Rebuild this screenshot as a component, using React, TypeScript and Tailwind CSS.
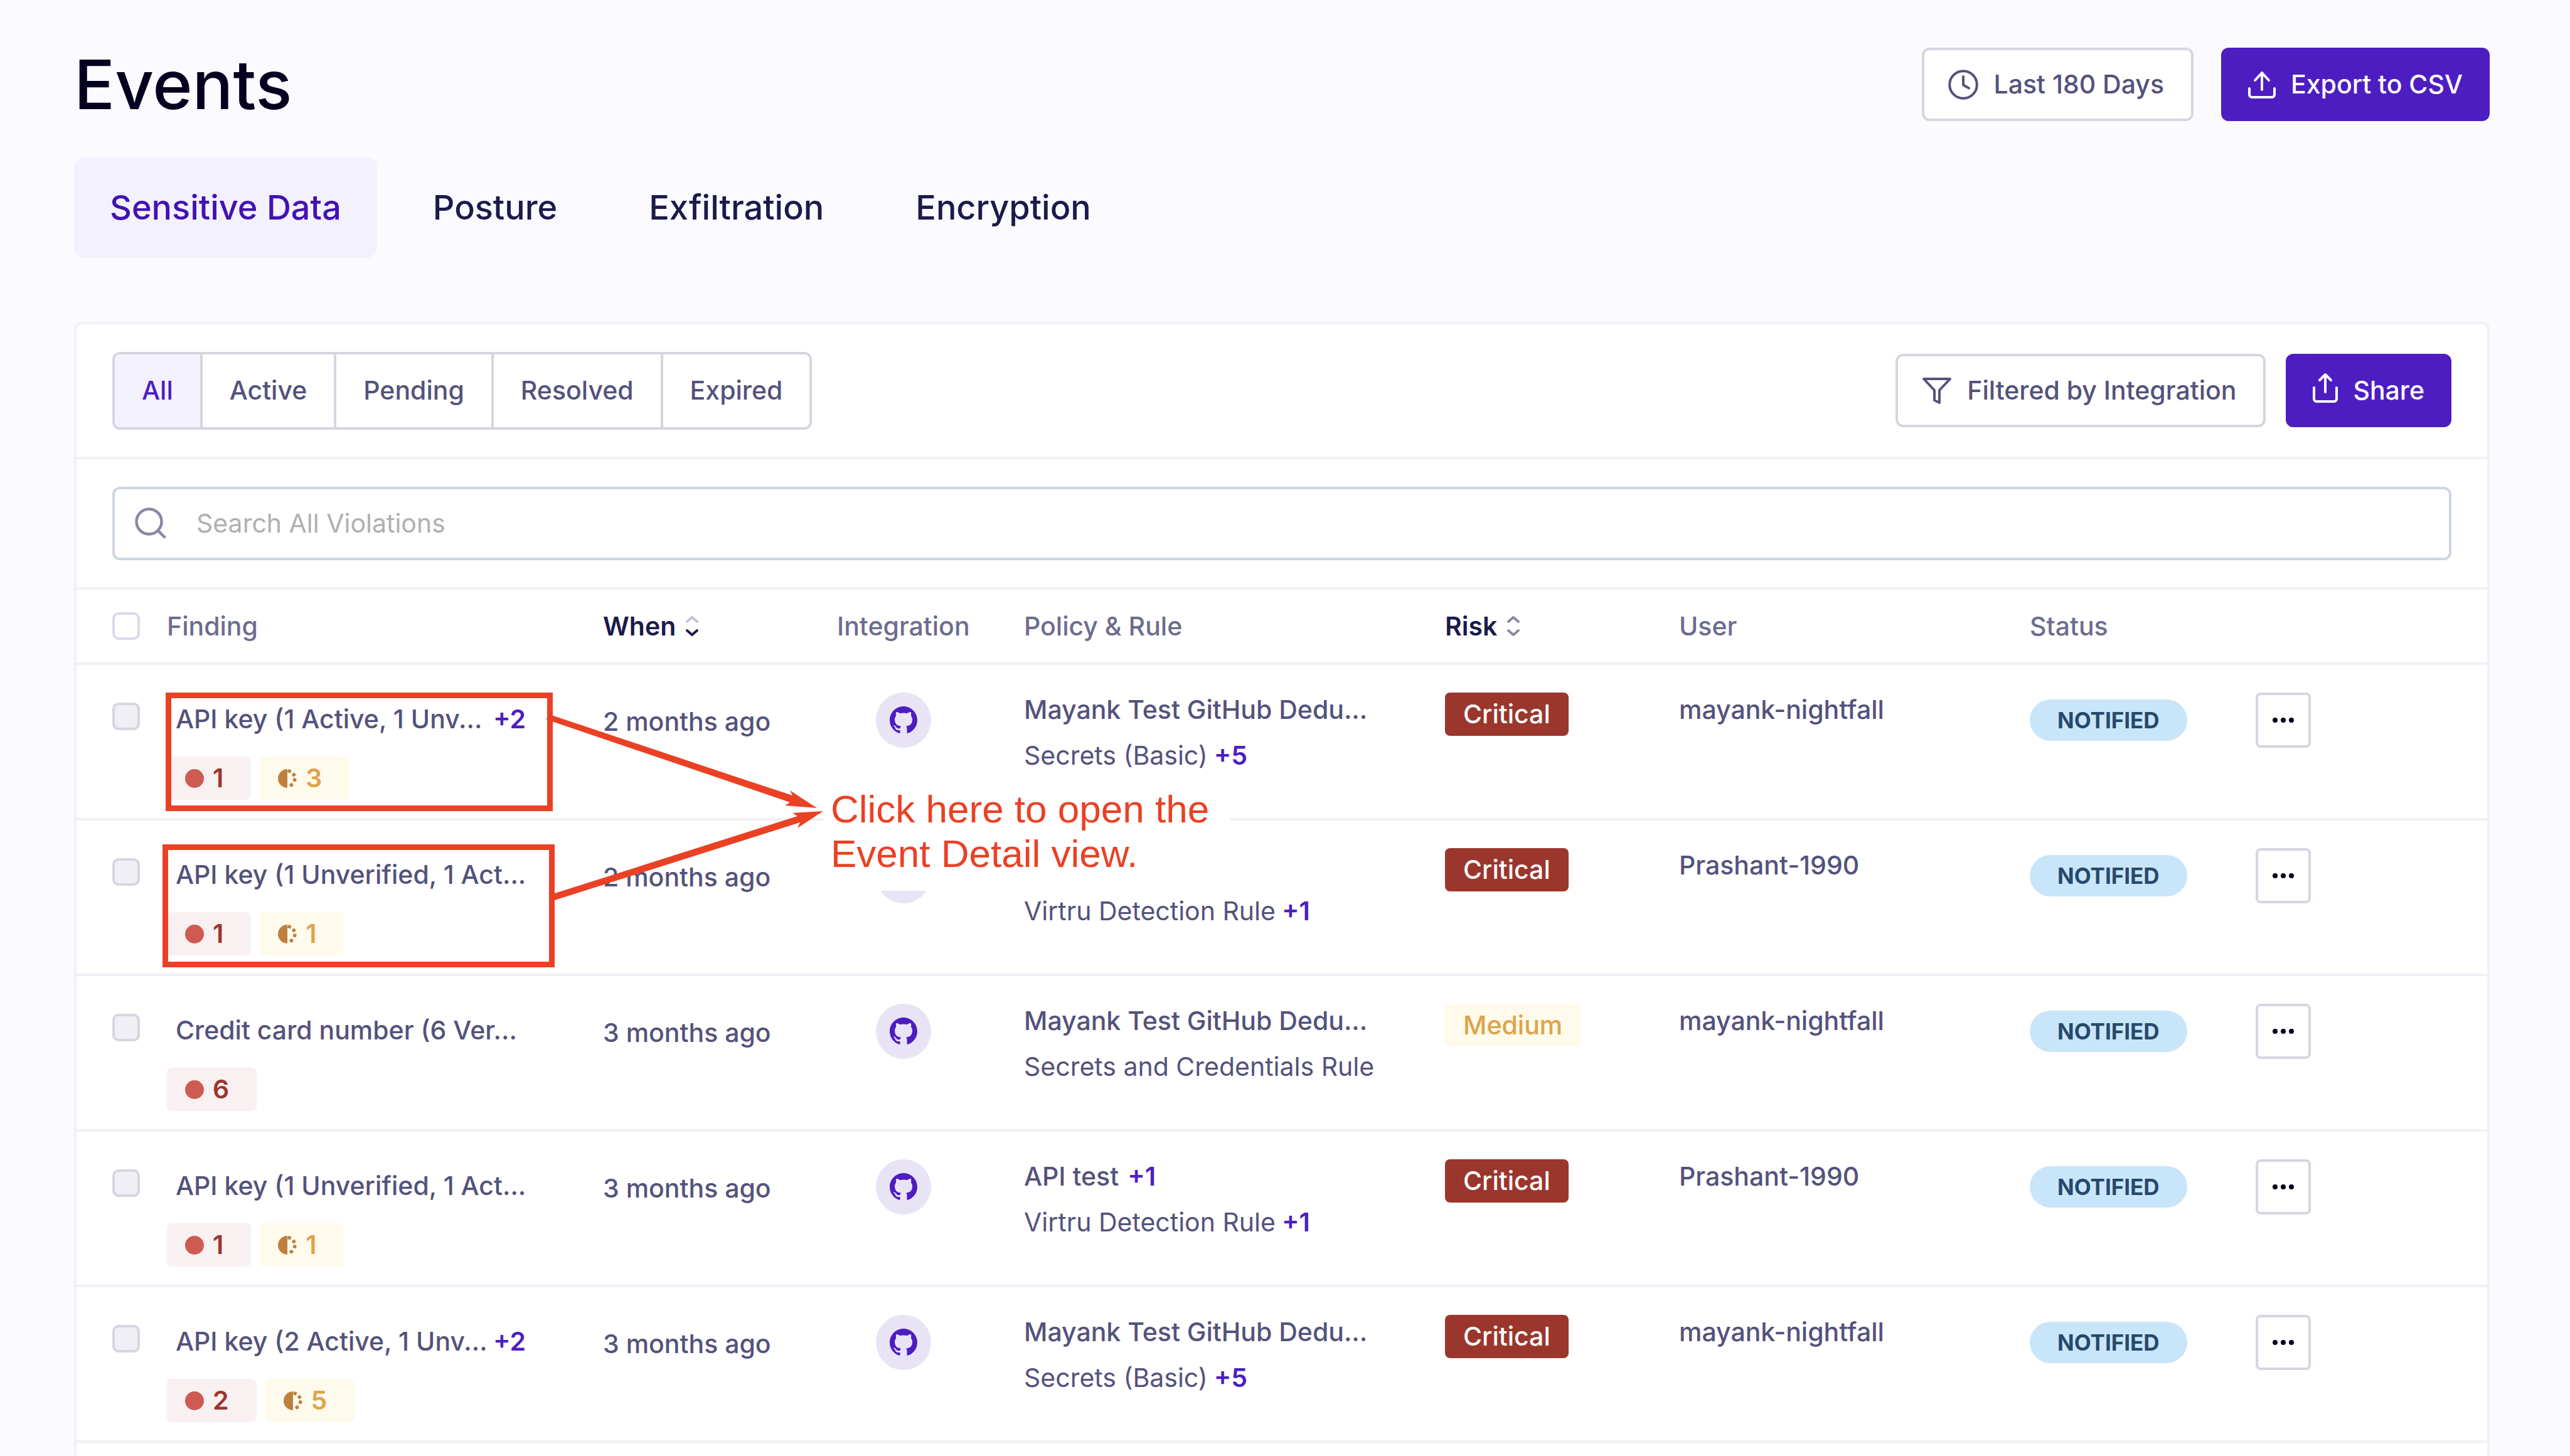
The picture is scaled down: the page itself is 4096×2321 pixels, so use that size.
import type { ReactNode } from "react";

type Tag = { kind: "active" | "unverified"; count: number };

type EventRow = {
  finding: string;
  more?: string;
  tags: Tag[];
  when: string;
  policy?: string;
  policyMore?: string;
  rule: string;
  ruleMore?: string;
  risk: "Critical" | "Medium";
  user: string;
};

const rows: EventRow[] = [
  {
    finding: "API key (1 Active, 1 Unv...",
    more: "+2",
    tags: [{ kind: "active", count: 1 }, { kind: "unverified", count: 3 }],
    when: "2 months ago",
    policy: "Mayank Test GitHub Dedu...",
    rule: "Secrets (Basic)",
    ruleMore: "+5",
    risk: "Critical",
    user: "mayank-nightfall",
  },
  {
    finding: "API key (1 Unverified, 1 Act...",
    tags: [{ kind: "active", count: 1 }, { kind: "unverified", count: 1 }],
    when: "2 months ago",
    rule: "Virtru Detection Rule",
    ruleMore: "+1",
    risk: "Critical",
    user: "Prashant-1990",
  },
  {
    finding: "Credit card number (6 Ver...",
    tags: [{ kind: "active", count: 6 }],
    when: "3 months ago",
    policy: "Mayank Test GitHub Dedu...",
    rule: "Secrets and Credentials Rule",
    risk: "Medium",
    user: "mayank-nightfall",
  },
  {
    finding: "API key (1 Unverified, 1 Act...",
    tags: [{ kind: "active", count: 1 }, { kind: "unverified", count: 1 }],
    when: "3 months ago",
    policy: "API test",
    policyMore: "+1",
    rule: "Virtru Detection Rule",
    ruleMore: "+1",
    risk: "Critical",
    user: "Prashant-1990",
  },
  {
    finding: "API key (2 Active, 1 Unv...",
    more: "+2",
    tags: [{ kind: "active", count: 2 }, { kind: "unverified", count: 5 }],
    when: "3 months ago",
    policy: "Mayank Test GitHub Dedu...",
    rule: "Secrets (Basic)",
    ruleMore: "+5",
    risk: "Critical",
    user: "mayank-nightfall",
  },
];

const tabs = ["Sensitive Data", "Posture", "Exfiltration", "Encryption"];
const filters = ["All", "Active", "Pending", "Resolved", "Expired"];

function ClockIcon() {
  return (
    <svg aria-hidden="true" className="size-12 shrink-0" viewBox="0 0 48 48" fill="none" stroke="currentColor" strokeWidth="4" strokeLinecap="round" strokeLinejoin="round">
      <circle cx="24" cy="24" r="21.8" />
      <path d="M24 11v13.5l9 5" />
    </svg>
  );
}

function ExportIcon() {
  return (
    <svg aria-hidden="true" className="size-11 shrink-0" viewBox="0 0 44 44" fill="none" stroke="currentColor" strokeWidth="4" strokeLinecap="round" strokeLinejoin="round">
      <path d="M2 28v10a4 4 0 0 0 4 4h32a4 4 0 0 0 4-4V28" />
      <path d="M22 30V3M11 15L22 3l11 12" />
    </svg>
  );
}

function ShareIcon() {
  return (
    <svg aria-hidden="true" className="h-[58px] w-10 shrink-0" viewBox="0 0 40 58" fill="none" stroke="currentColor" strokeWidth="4" strokeLinecap="round" strokeLinejoin="round">
      <path d="M2 24v18a4 4 0 0 0 4 4h28a4 4 0 0 0 4-4V24" />
      <path d="M20 31V3M11 12L20 3l9 9" />
    </svg>
  );
}

function FilterIcon() {
  return (
    <svg aria-hidden="true" className="h-11 w-12 shrink-0" viewBox="0 0 48 44" fill="none" stroke="currentColor" strokeWidth="4" strokeLinejoin="round">
      <path d="M3 3H45L28 21V41L20 37V21Z" />
    </svg>
  );
}

function SearchIcon() {
  return (
    <svg aria-hidden="true" className="size-[50px] shrink-0 text-[#8988a6]" viewBox="0 0 50 50" fill="none" stroke="currentColor" strokeWidth="4.5" strokeLinecap="round">
      <circle cx="22.5" cy="22.5" r="20" />
      <path d="M37 37L47 47" />
    </svg>
  );
}

function SortIcon({ up, down }: { up: string; down: string }) {
  return (
    <svg aria-hidden="true" className="h-[34px] w-5 shrink-0" viewBox="0 0 20 34" fill="none" strokeWidth="4" strokeLinecap="round" strokeLinejoin="round">
      <path className={up} d="M2 10L10 3L18 10" />
      <path className={down} d="M2 24L10 31L18 24" />
    </svg>
  );
}

function GitHubIcon() {
  return (
    <svg aria-hidden="true" className="size-11" viewBox="0 0 16 16" fill="currentColor">
      <path d="M8 0C3.58 0 0 3.58 0 8c0 3.54 2.29 6.53 5.47 7.59.4.07.55-.17.55-.38 0-.19-.01-.82-.01-1.49-2.01.37-2.53-.49-2.69-.94-.09-.23-.48-.94-.82-1.13-.28-.15-.68-.52-.01-.53.63-.01 1.08.58 1.23.82.72 1.21 1.87.87 2.33.66.07-.52.28-.87.51-1.07-1.78-.2-3.64-.89-3.64-3.95 0-.87.31-1.59.82-2.15-.08-.2-.36-1.02.08-2.12 0 0 .67-.21 2.2.82.64-.18 1.32-.27 2-.27s1.36.09 2 .27c1.53-1.04 2.2-.82 2.2-.82.44 1.1.16 1.92.08 2.12.51.56.82 1.27.82 2.15 0 3.07-1.87 3.75-3.65 3.95.29.25.54.73.54 1.48 0 1.07-.01 1.93-.01 2.2 0 .21.15.46.55.38A8.01 8.01 0 0 0 16 8c0-4.42-3.58-8-8-8z" />
    </svg>
  );
}

function HalfDotIcon() {
  return (
    <svg aria-hidden="true" className="size-[30px] shrink-0 text-[#bf803f]" viewBox="0 0 30 30" fill="currentColor">
      <path d="M15 0A15 15 0 0 0 15 30Z" />
      <rect x="15.5" y="0.6" width="5.4" height="5.4" rx="1.2" transform="rotate(15 18.2 3.3)" />
      <rect x="22.6" y="6.3" width="5.4" height="5.4" rx="1.2" transform="rotate(55 25.3 9)" />
      <rect x="24" y="14.5" width="5.4" height="5.4" rx="1.2" transform="rotate(10 26.7 17.2)" />
      <rect x="18.7" y="22.7" width="5.4" height="5.4" rx="1.2" transform="rotate(-30 21.4 25.4)" />
    </svg>
  );
}

function OutlineButton({ children }: { children: ReactNode }) {
  return (
    <button type="button" className="flex h-[117px] items-center gap-6 rounded-xl border-4 border-[#d6d5e0] bg-white pr-[43px] pl-[38px] font-medium text-[#54527c]">
      {children}
    </button>
  );
}

function SolidButton({ children }: { children: ReactNode }) {
  return (
    <button type="button" className="flex h-[117px] items-center gap-6 rounded-xl bg-[#4e1dc2] px-[43px] font-medium text-white">
      {children}
    </button>
  );
}

function CountTag({ kind, count }: Tag) {
  if (kind === "active") {
    return (
      <span className="flex h-[69px] items-center gap-3.5 rounded-lg bg-[#f9f0f1] pr-11 pl-[29px] font-semibold text-[#9b362c]">
        <span className="size-[30px] rounded-full bg-[#ce5b51]" />
        {count}
      </span>
    );
  }
  return (
    <span className="flex h-[69px] items-center gap-3.5 rounded-lg bg-[#fefaec] pr-11 pl-[29px] font-semibold text-[#dfa349]">
      <HalfDotIcon />
      {count}
    </span>
  );
}

function More({ children }: { children: ReactNode }) {
  return <a href="#more" className="font-semibold text-[#4e1dc2]">{children}</a>;
}

function EventTable() {
  return (
    <table className="w-full table-fixed border-separate border-spacing-0 text-left leading-[73px]">
      <colgroup>
        <col className="w-[144px]" />
        <col className="w-[695px]" />
        <col className="w-[373px]" />
        <col className="w-[298px]" />
        <col className="w-[671px]" />
        <col className="w-[373px]" />
        <col className="w-[559px]" />
        <col className="w-[360px]" />
        <col className="w-[369px]" />
      </colgroup>
      <thead className="text-[#6d6c8f] [&_th]:h-[120px] [&_th]:border-b-4 [&_th]:border-[#f0f0f6] [&_th]:p-0 [&_th]:align-middle [&_th]:font-medium">
        <tr>
          <th scope="col">
            <input type="checkbox" aria-label="Select all findings" className="ml-[57px] block size-11 appearance-none rounded-[10px] border-4 border-[#dcd9ea] bg-white" />
          </th>
          <th scope="col">Finding</th>
          <th scope="col" aria-sort="descending">
            <button type="button" className="flex items-center gap-4 font-semibold text-[#1b1a4b]">
              When
              <SortIcon up="stroke-[#c4c2d4]" down="stroke-[#1b1a4b]" />
            </button>
          </th>
          <th scope="col">Integration</th>
          <th scope="col">Policy &amp; Rule</th>
          <th scope="col">
            <button type="button" className="flex items-center gap-4 font-semibold text-[#1b1a4b]">
              Risk
              <SortIcon up="stroke-[#8988a6]" down="stroke-[#8988a6]" />
            </button>
          </th>
          <th scope="col">User</th>
          <th scope="col">Status</th>
          <th scope="col" aria-label="Actions" />
        </tr>
      </thead>
      <tbody className="text-[#54527c] [&_td]:h-[248px] [&_td]:border-b-4 [&_td]:border-[#f0f0f6] [&_td]:p-0 [&_td]:align-top">
        {rows.map((row, i) => (
          <tr key={i}>
            <td>
              <input type="checkbox" aria-label={`Select ${row.finding}`} className="mt-[60px] ml-[57px] block size-11 appearance-none rounded-[10px] border-4 border-[#d6d5e0] bg-[#f0eff5]" />
            </td>
            <td>
              <div className="mt-[50px] flex w-[572px] justify-between pl-3.5 font-medium whitespace-nowrap">
                <span>{row.finding}</span>
                {row.more && <More>{row.more}</More>}
              </div>
              <div className="mt-[23px] flex gap-3.5">
                {row.tags.map((tag) => (
                  <CountTag key={tag.kind} kind={tag.kind} count={tag.count} />
                ))}
              </div>
            </td>
            <td>
              <div className="mt-[54px] font-medium">{row.when}</div>
            </td>
            <td>
              <div className="mt-11 ml-[62px] flex size-[88px] items-center justify-center rounded-full bg-[#e8e4f5] text-[#4e1dc2]">
                <GitHubIcon />
              </div>
            </td>
            <td>
              <div className="mt-[35px] flex h-[73px] gap-3.5 font-medium whitespace-nowrap">
                {row.policy && <span>{row.policy}</span>}
                {row.policyMore && <More>{row.policyMore}</More>}
              </div>
              <div className="flex gap-2.5 whitespace-nowrap">
                <span>{row.rule}</span>
                {row.ruleMore && <More>{row.ruleMore}</More>}
              </div>
            </td>
            <td>
              <div className="mt-11 flex">
                <span
                  className={
                    row.risk === "Critical"
                      ? "flex h-[69px] items-center rounded-lg bg-[#9b362c] px-[29px] font-medium text-white"
                      : "flex h-[69px] items-center rounded-lg bg-[#fefaec] px-[29px] font-medium text-[#dfa349]"
                  }
                >
                  {row.risk}
                </span>
              </div>
            </td>
            <td>
              <div className="mt-[35px] font-medium">{row.user}</div>
            </td>
            <td>
              <div className="mt-[55px] flex">
                <span className="flex h-[66px] items-center rounded-full bg-[#c9e5f9] px-11 text-[35px] font-bold text-[#27496b]">
                  NOTIFIED
                </span>
              </div>
            </td>
            <td>
              <button type="button" aria-label="More actions" className="mt-11 flex size-[88px] items-center justify-center gap-[5px] rounded-lg border-4 border-[#d6d5e0] bg-white">
                <span className="size-2 rounded-full bg-[#04001f]" />
                <span className="size-2 rounded-full bg-[#04001f]" />
                <span className="size-2 rounded-full bg-[#04001f]" />
              </button>
            </td>
          </tr>
        ))}
      </tbody>
    </table>
  );
}

function Annotations() {
  return (
    <div className="pointer-events-none absolute inset-0">
      <div className="absolute top-[1104px] left-[264px] h-[189px] w-[617px] border-[9px] border-[#ea4125]" />
      <div className="absolute top-[1346px] left-[259px] h-[196px] w-[625px] border-[9px] border-[#ea4125]" />
      <p className="absolute top-[1244px] left-[1312px] h-[176px] w-[648px] bg-white pt-2.5 pl-3 font-['Liberation_Sans',sans-serif] text-[62px] leading-[71px] text-[#ea4125]">
        Click here to open the
        <br />
        Event Detail view.
      </p>
      <svg aria-hidden="true" className="absolute top-[1120px] left-[860px] h-[320px] w-[460px]" viewBox="860 1120 460 320" fill="#ea4125">
        <path d="M873 1138L1175 1239L1263 1268L1259 1260L1302 1288L1251 1284L1259 1279L1142 1239L871 1147Z" />
        <path d="M881 1425L1271 1301L1263 1296L1312 1293L1271 1320L1275 1311L884 1435Z" />
      </svg>
    </div>
  );
}

export default function App() {
  return (
    <div className="relative flex min-h-screen flex-col bg-[#fbfaff] pt-[76px] pr-32 pl-[118px] font-[Inter,sans-serif] text-[41px] leading-none">
      <header className="flex items-center justify-between">
        <h1 className="text-[108px] font-medium text-[#04001f]">Events</h1>
        <div className="flex gap-11">
          <OutlineButton>
            <ClockIcon />
            Last 180 Days
          </OutlineButton>
          <SolidButton>
            <ExportIcon />
            Export to CSV
          </SolidButton>
        </div>
      </header>

      <nav aria-label="Event categories" className="mt-[58px] flex gap-8 text-[54px] font-medium">
        {tabs.map((tab, i) => (
          <a
            key={tab}
            href="#events"
            className={
              i === 0
                ? "flex h-40 items-center rounded-2xl bg-[#f3f1fb] px-[57px] text-[#4211b4]"
                : "flex h-40 items-center rounded-2xl px-[57px] text-[#1b1a4b]"
            }
          >
            {tab}
          </a>
        ))}
      </nav>

      <main className="mt-[102px] flex-1 rounded-t-xl border-4 border-b-0 border-[#f0f0f6] bg-white">
        <div className="flex h-[215px] items-center justify-between border-b-4 border-[#f0f0f6] px-[57px]">
          <div role="group" aria-label="Filter by state" className="flex h-[124px] divide-x-4 divide-[#d6d5e0] overflow-hidden rounded-xl border-4 border-[#d6d5e0]">
            {filters.map((filter, i) => (
              <button
                key={filter}
                type="button"
                aria-pressed={i === 0}
                className={
                  i === 0
                    ? "bg-[#f3f1fb] px-[43px] font-medium text-[#4e1dc2]"
                    : "px-[43px] font-medium text-[#54527c]"
                }
              >
                {filter}
              </button>
            ))}
          </div>
          <div className="flex gap-8">
            <OutlineButton>
              <FilterIcon />
              Filtered by Integration
            </OutlineButton>
            <SolidButton>
              <ShareIcon />
              Share
            </SolidButton>
          </div>
        </div>

        <div className="flex h-[208px] items-center border-b-4 border-[#f0f0f6] px-[57px]">
          <label className="flex h-[117px] flex-1 items-center gap-12 rounded-xl border-4 border-[#ccd5e0] pl-8">
            <SearchIcon />
            <input type="text" aria-label="Search All Violations" placeholder="Search All Violations" className="h-full flex-1 bg-transparent outline-none placeholder:text-[#b0b0b0]" />
          </label>
        </div>

        <EventTable />
      </main>

      <Annotations />
    </div>
  );
}
